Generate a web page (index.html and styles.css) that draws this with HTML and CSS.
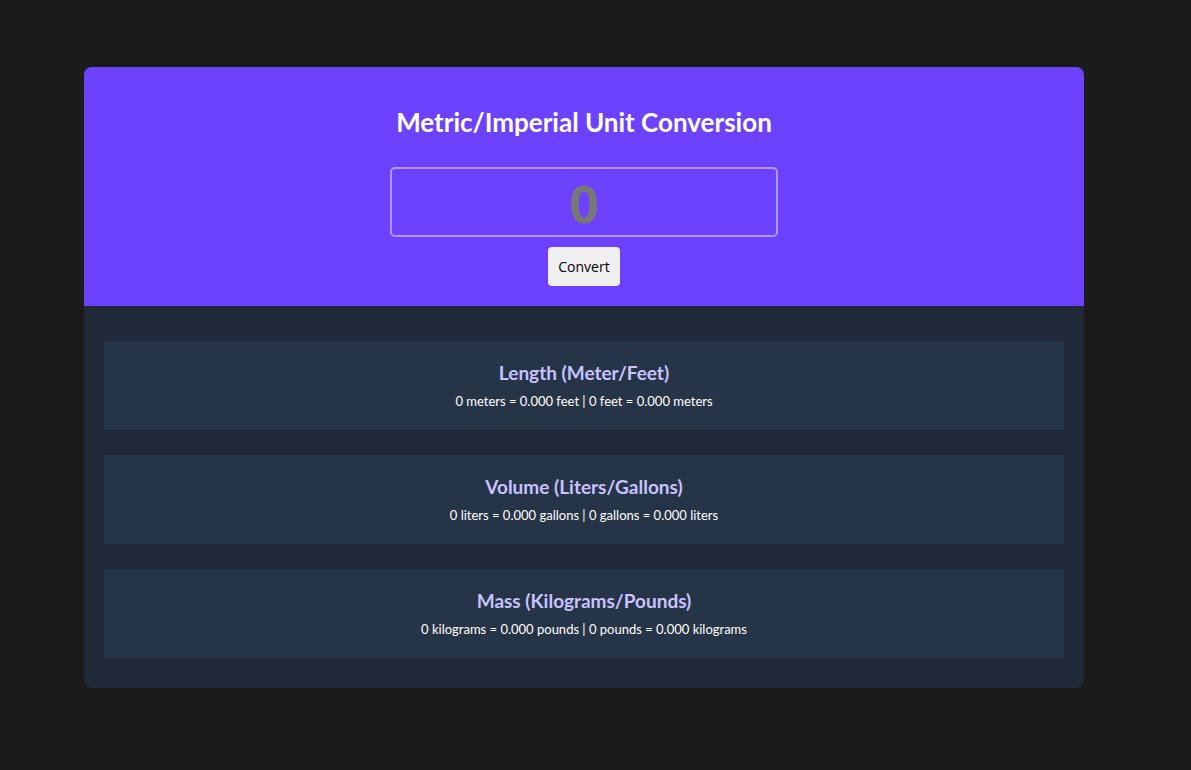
FILE: index.html
```html
<!DOCTYPE html>
<html lang="en">
<head>
<meta charset="utf-8">
<title>Unit Conversion</title>
<link rel="stylesheet" href="styles.css">
</head>
<body>
<main class="app">
  <section class="top">
    <h1 class="title">Metric/Imperial Unit Conversion</h1>
    <input class="num" type="text" value="0">
    <button class="btn">Convert</button>
  </section>
  <section class="results">
    <div class="card">
      <h2 class="card-title">Length (Meter/Feet)</h2>
      <p class="card-text">0 meters = 0.000 feet | 0 feet = 0.000 meters</p>
    </div>
    <div class="card">
      <h2 class="card-title">Volume (Liters/Gallons)</h2>
      <p class="card-text">0 liters = 0.000 gallons | 0 gallons = 0.000 liters</p>
    </div>
    <div class="card">
      <h2 class="card-title">Mass (Kilograms/Pounds)</h2>
      <p class="card-text">0 kilograms = 0.000 pounds | 0 pounds = 0.000 kilograms</p>
    </div>
  </section>
</main>
</body>
</html>
```
FILE: styles.css
```css
html, body {
  margin: 0;
  padding: 0;
}
body {
  background: #1b1b1b;
  font-family: "Lato", "Open Sans", sans-serif;
  padding-top: 67px;
}
.app {
  width: 1000px;
  margin: 0 auto 0 84px;
  border-radius: 8px;
  overflow: hidden;
  background: #1f2937;
}
.top {
  background: #6c42ff;
  height: 239px;
  box-sizing: border-box;
  padding-top: 38px;
  display: flex;
  flex-direction: column;
  align-items: center;
}
.title {
  margin: 0;
  color: #fff;
  font-size: 26px;
  font-weight: 700;
  line-height: 34px;
}
.num {
  margin-top: 28px;
  width: 388px;
  height: 70px;
  box-sizing: border-box;
  background: transparent;
  border: 2px solid rgba(255, 255, 255, 0.45);
  border-radius: 5px;
  text-align: center;
  font-family: "Open Sans", "Liberation Sans", sans-serif;
  font-size: 52px;
  font-weight: 700;
  color: #777;
  outline: none;
  padding: 0;
}
.btn {
  margin-top: 10px;
  width: 72px;
  height: 39px;
  background: #efefef;
  border: none;
  border-radius: 4px;
  font-family: "Open Sans", sans-serif;
  font-size: 14px;
  color: #000;
  padding: 0;
}
.results {
  padding: 35px 20px 30px;
  display: flex;
  flex-direction: column;
  gap: 25px;
}
.card {
  background: #263447;
  height: 89px;
  box-sizing: border-box;
  padding-top: 20px;
  text-align: center;
}
.card-title {
  margin: 0;
  color: #c8c3ff;
  font-size: 19px;
  font-weight: 700;
  line-height: 24px;
}
.card-text {
  margin: 8px 0 0;
  color: #fff;
  font-size: 13px;
  line-height: 16px;
}
```
